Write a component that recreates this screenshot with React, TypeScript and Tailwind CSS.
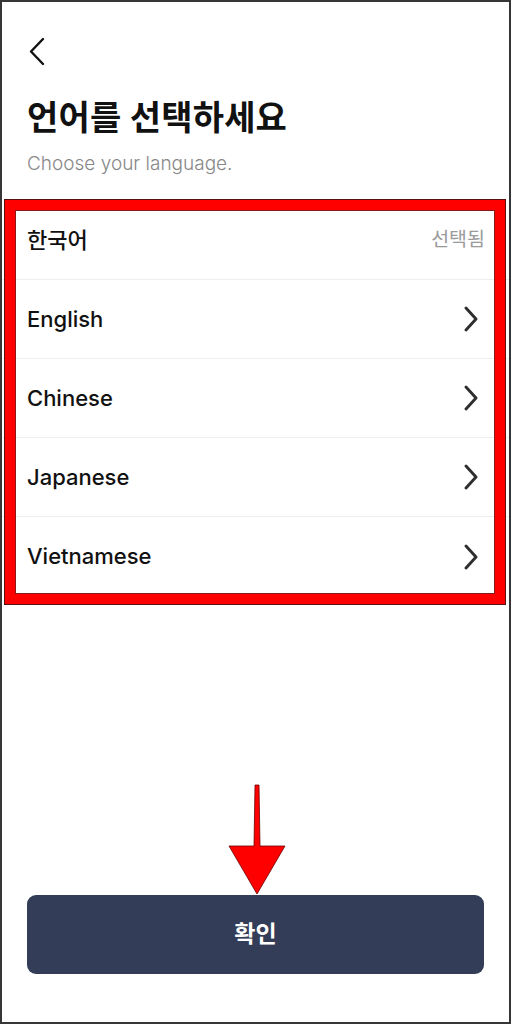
import React from "react";

const rows = [
  { label: "한국어", selected: true },
  { label: "English" },
  { label: "Chinese" },
  { label: "Japanese" },
  { label: "Vietnamese" },
];

function ChevronRight() {
  return (
    <svg width="16" height="26" viewBox="0 0 16 26" fill="none">
      <path d="M3 2 L13 13 L3 24" stroke="#2e2e2e" strokeWidth="2.9" strokeLinecap="round" strokeLinejoin="round" />
    </svg>
  );
}

export default function App() {
  return (
    <div
      className="relative w-[511px] h-[1024px] border-2 border-[#363636] bg-white flex flex-col overflow-hidden"
      style={{ fontFamily: 'Inter, "Noto Sans CJK KR", sans-serif' }}
    >
      <div className="pl-[26px] pt-[35px]">
        <svg width="18" height="29" viewBox="0 0 18 29" fill="none">
          <path d="M15 2 L3 14.5 L15 27" stroke="#111111" strokeWidth="2.4" strokeLinecap="round" strokeLinejoin="round" />
        </svg>
      </div>
      <h1 className="mt-[32px] pl-[25px] text-[34px] leading-[40px] font-bold text-[#111] tracking-[0.2px]">
        언어를 선택하세요
      </h1>
      <p className="mt-[14px] pl-[25px] text-[19px] leading-[24px] font-light text-[#888888]">
        Choose your language.
      </p>
      <div className="mt-[25px] flex flex-col">
        {rows.map((r, i) => (
          <div
            key={i}
            className={`h-[79px] flex items-center justify-between pl-[25px] pr-[30px] ${i < rows.length - 1 ? "border-b border-[#eeeeee]" : ""}`}
          >
            <span className="text-[22px] font-medium text-[#111]">{r.label}</span>
            {r.selected ? (
              <span className="text-[19.5px] text-[#9a9a9a] -mr-[6px]">선택됨</span>
            ) : (
              <ChevronRight />
            )}
          </div>
        ))}
      </div>
      <div className="flex-1" />
      <div className="px-[25px] mb-[48px]">
        <button className="w-[457px] h-[79px] rounded-[9px] bg-[#333d58] text-white text-[23px] font-bold flex items-center justify-center">
          확인
        </button>
      </div>

      {/* red annotation box */}
      <div className="absolute left-[3px] top-[198px] w-[500px] h-[404px] border-[10px] border-[#ff0000] shadow-[0_0_0_1px_#5a1010,inset_0_0_0_1px_#8a1a1a] pointer-events-none" />

      {/* red arrow */}
      <svg className="absolute left-[224px] top-[781px]" width="62" height="114" viewBox="0 0 62 114">
        <polygon
          points="29,2 33,2 34,63 59,63 31,111 3,63 28,63"
          fill="#ff0000"
          stroke="#6a0000"
          strokeWidth="0.8"
          strokeLinejoin="miter"
        />
      </svg>
    </div>
  );
}
